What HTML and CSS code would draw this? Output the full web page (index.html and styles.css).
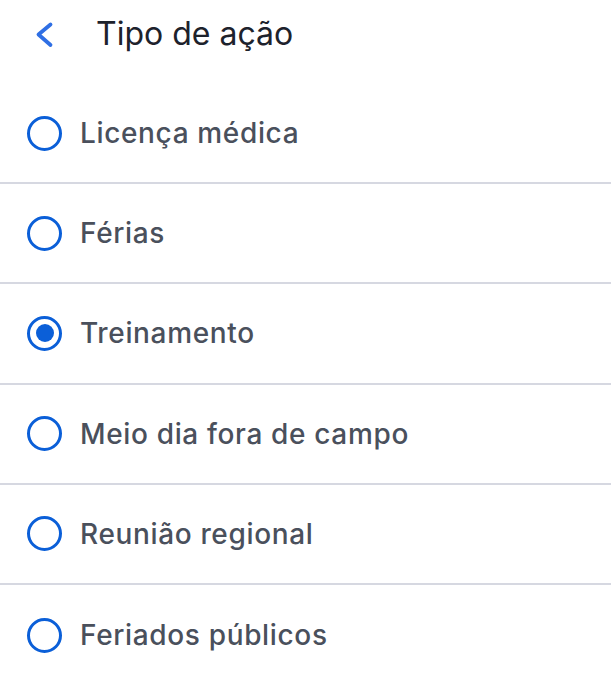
FILE: index.html
```html
<!DOCTYPE html>
<html lang="pt">

<head>
    <meta charset="UTF-8">
    <meta name="viewport" content="width=device-width, initial-scale=1.0">
    <title>Tipo de ação</title>
    <link rel="stylesheet" href="styles.css">
</head>

<body>
    <div class="header">
        <svg class="back" width="24" height="30" viewBox="0 0 24 30">
            <path d="M20.5 5.5 L8.5 15.5 L20.5 26" fill="none" stroke="#2f6fe4" stroke-width="3.8" stroke-linecap="round" stroke-linejoin="round" />
        </svg>
        <h1>Tipo de ação</h1>
    </div>

    <ul class="options">
        <li><span class="radio"></span>Licença médica</li>
        <li><span class="radio"></span>Férias</li>
        <li class="checked"><span class="radio"></span>Treinamento</li>
        <li><span class="radio"></span>Meio dia fora de campo</li>
        <li><span class="radio"></span>Reunião regional</li>
        <li><span class="radio"></span>Feriados públicos</li>
    </ul>
</body>

</html>
```

FILE: styles.css
```css
* {
    margin: 0;
    padding: 0;
    box-sizing: border-box;
    font-family: Inter, "Noto Sans", sans-serif;
}

body {
    background: #fff;
}

.header {
    display: flex;
    align-items: center;
    height: 67px;
    padding-left: 30px;
}

.back {
    display: block;
    margin-right: 42px;
}

.header h1 {
    font-size: 32px;
    font-weight: 400;
    color: #1d222c;
}

.options {
    list-style: none;
    margin-top: 17px;
}

.options li {
    display: flex;
    align-items: center;
    height: 100.2px;
    padding-left: 27px;
    border-bottom: 2px solid #d6d8e1;
    font-size: 28px;
    font-weight: 500;
    color: #4a505c;
    letter-spacing: 0.65px;
}

.options li:last-child {
    border-bottom: none;
}

.radio {
    width: 35px;
    height: 35px;
    border: 3px solid #0b5fd8;
    border-radius: 50%;
    margin-right: 18px;
    display: flex;
    align-items: center;
    justify-content: center;
}

.options li.checked .radio::after {
    content: '';
    width: 18px;
    height: 18px;
    border-radius: 50%;
    background: #0b5fd8;
}
```
